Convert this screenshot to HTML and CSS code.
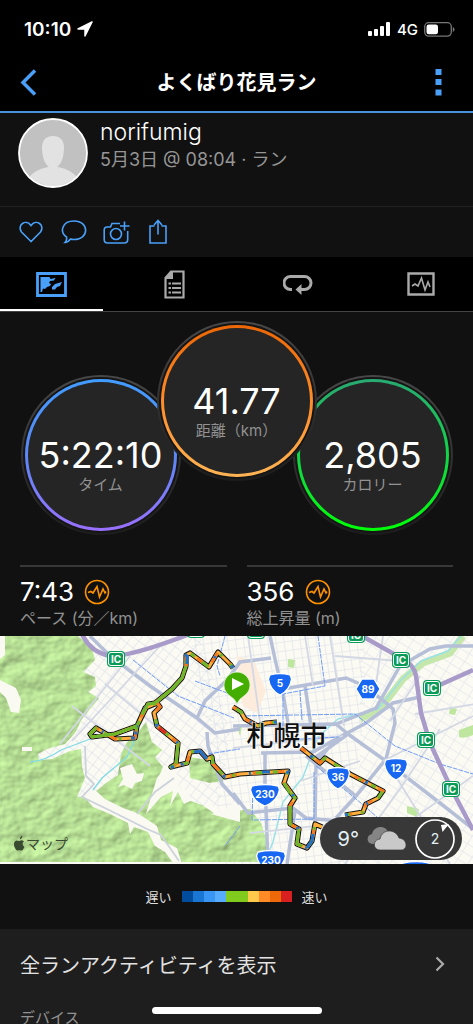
FILE: index.html
```html
<!DOCTYPE html>
<html lang="ja">
<head>
<meta charset="utf-8">
<meta name="viewport" content="width=device-width, initial-scale=1">
<title>よくばり花見ラン</title>
<link rel="stylesheet" href="styles.css">
</head>
<body>
<div class="status">
  <span class="clock">10:10</span>
  <svg width="16" height="16" viewBox="0 0 16 16"><path d="M15 1 1 8h7v7z" fill="#fff" stroke="#fff" stroke-width="1.500" stroke-linejoin="round"/></svg>
  <span class="spacer"></span>
  <svg width="23" height="15" viewBox="0 0 23 15" fill="#fff"><rect x="0" y="9" width="4" height="5" rx="1"/><rect x="6" y="7" width="4" height="7" rx="1"/><rect x="12" y="4" width="4" height="10" rx="1"/><rect x="18" y="0" width="4" height="14" rx="1"/></svg>
  <span class="network">4G</span>
  <svg width="31" height="15" viewBox="0 0 31 15"><rect x=".7" y=".7" width="26.600" height="13.400" rx="4" fill="none" stroke="#777" stroke-width="1.300"/><rect x="2.500" y="2.500" width="11.500" height="9.800" rx="2.300" fill="#fff"/><path d="M28.800 5v5q1.700-.8 1.700-2.500T28.800 5z" fill="#777"/></svg>
</div>
<header class="header">
  <button class="icon-button" aria-label="戻る"><svg width="17" height="27" viewBox="0 0 17 27"><path d="M15 1.500 3 13.500l12 12" fill="none" stroke="#4aa0f8" stroke-width="3.500"/></svg></button>
  <h1 class="title">よくばり花見ラン</h1>
  <button class="icon-button" aria-label="メニュー"><svg width="17" height="27" viewBox="0 0 17 27" fill="#4aa0f8"><path d="M5.500 0h6v6h-6zM5.500 10h6v6h-6zM5.500 20.500h6v6h-6z"/></svg></button>
</header>
<main>
<section class="profile">
  <svg class="avatar" width="70" height="70" viewBox="0 0 70 70"><defs><clipPath id="face"><circle cx="35" cy="35" r="33.500"/></clipPath></defs><circle cx="35" cy="35" r="34" fill="#c1c1c1"/><g clip-path="url(#face)" fill="#e2e2e2"><path d="M35 18c8 0 11 5 11 12 0 10-4 19-9 20h-4c-5-1-9-10-9-20 0-7 3-12 11-12z"/><path d="M10 60q8-9 20-11h10q12 2 20 11v10H10z"/></g><path d="M12 60q23 17 46 0" fill="none" stroke="#c8c8c8"/><circle cx="35" cy="35" r="34" fill="none" stroke="#fff" stroke-width="1.800"/></svg>
  <div><p class="name">norifumig</p><p class="date">5月3日 @ 08:04 · ラン</p></div>
</section>
<div class="actions">
  <button aria-label="いいね"><svg width="26" height="26" viewBox="0 0 26 26"><path d="M13 22.500 3.500 13C-1.500 6 8-.5 13 6.500 18-.5 27.500 6 22.500 13z"/></svg></button>
  <button aria-label="コメント"><svg width="26" height="26" viewBox="0 0 26 26"><path d="M5.500 18C-2 12.500 1.500 2 13 2c15.500 0 15.500 18.500 0 18.500-1.500 0-2.500 0-3.500-.5-1.500 2-3.500 3.500-5.500 3.500 1.500-1.500 2-3.500 1.500-5.500z"/></svg></button>
  <button aria-label="写真を追加"><svg width="27" height="26" viewBox="0 0 27 26"><path d="M17 4.500H9L7.500 8H4Q1.200 8 1.200 11v9.500q0 3.500 3.500 3.500h16.500q3.500 0 3.500-3.500V12M21.500 2.500v9M17 7h9.500"/><circle cx="13" cy="15" r="5.500"/></svg></button>
  <button aria-label="共有"><svg width="20" height="26" viewBox="0 0 20 26"><path d="M6.500 7H2v17h16V7h-4.500M10 15.500V2M6 6l4-4.500L14 6"/></svg></button>
</div>
<nav class="tabs">
  <button class="tab active" aria-label="概要"><svg width="31" height="25" viewBox="0 0 31 25"><path d="M1.500 1.500h28v22h-28z" fill="none" stroke="#4aa0f8" stroke-width="2.800"/><path d="M4.500 5h9l1 2 5-1-1.500 2.500-4 .5-1 2 2 1-1 2-3 1-2 2-2-.5L6 20H4.500zM26 10l-2 4-3 1-2 2.500h-3V15l3-3z" fill="#4aa0f8"/></svg></button>
  <button class="tab" aria-label="詳細"><svg width="21" height="29" viewBox="0 0 21 29"><path d="M7 1.500h12.500v26h-18V8z" fill="none" stroke="#aaa" stroke-width="2.200"/><path d="M1.500 9V7L7 1.500h2V9z" fill="#aaa"/><path d="M4.500 13.500H7m1 0h9M4.500 18H7m1 0h9M4.500 22.500H7m1 0h9" stroke="#aaa" stroke-width="2"/></svg></button>
  <button class="tab" aria-label="ラップ"><svg width="30" height="21" viewBox="0 0 30 21"><path d="M9 15.500H7.500a6.500 6.500 0 0 1 0-13h14a6.500 6.500 0 0 1 0 13H17" fill="none" stroke="#aaa" stroke-width="3"/><path d="M12.500 15.500 18.500 10v11z" fill="#aaa"/></svg></button>
  <button class="tab" aria-label="グラフ"><svg width="28" height="24" viewBox="0 0 28 24"><path d="M1.500 1.500h25v21h-25z" fill="none" stroke="#aaa" stroke-width="2.400"/><path d="M5 14l3-2 3 2 3.500-8 3.500 12L21 10l2 5" fill="none" stroke="#aaa" stroke-width="1.600"/></svg></button>
</nav>
<section class="gauges">
  <div class="gauge"><div class="ring time"><p class="value">5:22:10</p><p class="label">タイム</p></div></div>
  <div class="gauge main"><div class="ring distance"><p class="value">41.77</p><p class="label">距離（km）</p></div></div>
  <div class="gauge"><div class="ring calories"><p class="value">2,805</p><p class="label">カロリー</p></div></div>
</section>
<section class="stats">
  <div class="stat"><p class="stat-value">7:43 <svg width="26" height="26" viewBox="0 0 26 26"><g fill="none" stroke="#ff9200" stroke-width="1.600"><circle cx="13" cy="13" r="11.500"/><path d="M4 13.500l3-1 2 1.500 4-6.500 2.500 10.500L19 10l2 4 1-1.500"/></g></svg></p><p class="label wide">ペース (分／km)</p></div>
  <div class="stat"><p class="stat-value">356 <svg width="26" height="26" viewBox="0 0 26 26"><g fill="none" stroke="#ff9200" stroke-width="1.600"><circle cx="13" cy="13" r="11.500"/><path d="M4 13.500l3-1 2 1.500 4-6.500 2.500 10.500L19 10l2 4 1-1.500"/></g></svg></p><p class="label wide">総上昇量 (m)</p></div>
</section>
<section class="map">
<svg class="map-art" viewBox="0 0 473 228" role="img" aria-label="ルートマップ">
  <defs>
    <pattern id="gridW" width="9" height="8" patternUnits="userSpaceOnUse" patternTransform="rotate(-52)"><path d="M0 0H9M0 0V8" stroke="#d9dde8" stroke-width="1.100"/></pattern>
    <pattern id="gridC" width="8" height="9" patternUnits="userSpaceOnUse" patternTransform="rotate(-8)"><path d="M0 0H8M0 0V9" stroke="#dadfe8" stroke-width="1.100"/></pattern>
    <pattern id="gridE" width="11" height="9" patternUnits="userSpaceOnUse" patternTransform="rotate(32)"><path d="M0 0H11M0 0V9" stroke="#dce0e8" stroke-width="1"/></pattern>
    <filter id="relief" x="0" y="0" width="100%" height="100%" color-interpolation-filters="sRGB"><feTurbulence type="fractalNoise" baseFrequency=".05 .06" numOctaves="3" seed="6"/><feDiffuseLighting lighting-color="#c0ea9c" surfaceScale="1.800" diffuseConstant="1.120"><feDistantLight azimuth="225" elevation="58"/></feDiffuseLighting><feComposite in2="SourceGraphic" operator="in"/></filter>
    <g id="ic"><rect x="-9" y="-8" width="18" height="16" rx="4" fill="#0b9b59"/><rect x="-7.500" y="-6.500" width="15" height="13" rx="2.500" fill="none" stroke="#fff"/><text y="4" class="sign">IC</text></g>
    <path id="shield" d="M-10-9Q0-12 10-9q1 2 1.500 4Q10 6 0 11-10 6-11.500-5-11-7-10-9z" fill="#1767f2" stroke="#fff" stroke-width="1.300"/>
    <path id="wide" d="M-13-9Q0-12 13-9q1 2 1.500 4Q12 7 0 11-12 7-14.500-5-14-7-13-9z" fill="#1767f2" stroke="#fff" stroke-width="1.300"/>
    <path id="route" d="M233 32l-3-4-12-12-9 15-19-14-4 2v11l-4 12-10 11-17 14-7 1-6 12-5 10-22 8-23 3-2-3 6-6 19 11 20-1 2-12 8-18 12-5 3 4-6 6 3 13 21 17-2 21-5 3 16-4 3-11 10-1 7 8 5-2 1 7 12 13 15-3 48-3-4 12 11 15-5 8v18l9 5-2 15 10 4 5-7 3-17 7 3M345 179l18-3 3-8 12-6 5-7-33-17-25-16-5 5-19-15M277 86l-11 1-8 3-13-7-4-7-8-5"/>
  </defs>
  <path fill="#fbfaf3" d="M0 0h473v228H0z"/>
  <path fill="url(#gridW)" d="M70 0h130l30 95-10 75H20z"/>
  <path fill="url(#gridC)" d="M190 0h175v70L345 228H225l-15-130z"/>
  <path fill="url(#gridE)" d="M360 0h113v228H335l25-100z"/>
  <path fill="#fdecdc" d="M237 20l17 5 12 30-9 22-14-7-5-22z"/>
  <g fill="#b6df94" filter="url(#relief)"><path d="M0 0h78l14 12 3 12-12 12 12 5 1 9-8 6 11 6-8 10-9 11-7 14-10 11-18 5-9 5 1 6 13-1 18-8 11-2 1 18 3 11-8 19 13-1 16-13 12-8 3-21 6-12 12-11 7-9 6 20 10 8-7 7 8 10-6 14 8 9 8-2 15 12 14 5 15 10 13-3 20-3 11 14 7 22v17H0z"/><path d="M189 121l18 3 17 12-1 9-13 2-20-5z"/></g>
  <g fill="#fafaf2"><path d="M0 44l16 8 5 12-2 13-8-1-5-14-6-6zM22 111h10v4H22zM82 158l13-4 10 9 18 9 14 5 8 5 12 8 4 14 16 8 5 16h-8l-9-12-10-6-7-14-14-5-4 7-2-11-18-9-17-7zM120 132l12-4 5 10 7-1-2 8-7 2-3 6-8-4-6 2 5-8zM157 142l10-13 10 8 2 14 9 4 4 9-8 4-6-12-8 14 3-15-12 6-15 17 5-17zM211 178l14-4 15-14v26l-11-3z"/><path d="M0 0h5v19l-5 4z"/></g>
  <path d="M30 126q15-1 31-12l37-14M135 103l-8 18-25 21-9 12" fill="none" stroke="#83dbe7" stroke-width="1.300"/>
  <path d="M85 110l1 30 8 8-12 13 25 12 40 20 14 6 18 26M137 178l18-22 19-14" fill="none" stroke="#cdd3dc" stroke-width="1.800"/>
  <path d="M463 0l-13 17-27 10-20 16-23 30-20 10" fill="none" stroke="#c6e7ab" stroke-width="7"/>
  <path d="M461 0l-13 15-27 10-20 19-23 29-40 10-20 18-15 40-20 25-10 40-9 22" fill="none" stroke="#9ae2e8" stroke-width="1.500"/>
  <g fill="#bfe69f"><path d="M288 23l7 1-1 8-6-1zM450 71l7 2-2 6-6-1zM459 94l14-5v10q-9 4-14 2zM407 170l12 3-2 8-10-4zM236 88l6 2-2 10z"/></g>
  <g fill="none" stroke="#b5bfd7" stroke-width="3.500">
    <path d="M90 0l20 20 40 30 47 32 18 15 25-4M197 82l8-17 23-22 12-17 31-4M207 96l1 14 4 12 10 26 18 20"/>
    <path d="M270 0l5 23 8 34 5 30M283 53l63-11 14 6 20 14 13 11 2 14-9 36-30 37-20 22"/>
    <path d="M233 90l103-2 40-16 24-42 30-17 16-3h27M261 117l52-1 23-13 30-16 27-20 27-6M336 88l12 10 35 25 57 44 33 26"/>
    <path d="M305 50l6 40M233 157l15 20 45-5 13 10 33 3M265 117v30l3 81M316 127l-1 60M316 127l20-24M295 175l-8 53M348 98l-32 23M356 160l-50-40"/>
  </g>
  <g fill="none" stroke="#d3d8e4" stroke-width="1.800"><path d="M72 70l78 60M105 48l70 58M130 20l-70 88M160 10l-88 95M248 0l14 100M305 0l8 50M330 0l14 90M383 0l-8 55M233 112l110-12M300 145l60-20M345 228l55-75 40-60M385 123l65 105M420 40l-30 45M473 80l-90 45M473 140l-70 50M250 197l75-8M335 20l65 5M475 68l-60 10"/></g>
  <path d="M133 24l45 36 56 22M195 45l40 15M225 0l-8 30 3 10M318 0l7 50-42 8v46l56-3M240 80l115-2 40 32 45 18 33 10M316 130l46 38 40 35M253 150l-1 34 62-1V135M208 118l32-5M300 55l2 30M240 190l-15 20" fill="none" stroke="#719df5" stroke-width="1" stroke-dasharray="5 1"/>
  <g fill="none" stroke="#a99bc9" stroke-width="4.500"><path d="M82-2q8 18 28 22 20 1 80-22M362 0l39 22q13 6 15 18l5 37 9 30 20 43 23 44M433 52l40-18"/></g>
  <g fill="none" stroke-linejoin="round">
    <use href="#route" stroke="#141414" stroke-width="5.200"/>
    <use href="#route" stroke="#ffad3b" stroke-width="3"/>
    <use href="#route" stroke="#f47b20" stroke-width="3" stroke-dasharray="7 16 11 13"/>
    <use href="#route" stroke="#70b82b" stroke-width="3" stroke-dasharray="5 11 3 21 8 9"/>
    <use href="#route" stroke="#2471c8" stroke-width="3" stroke-dasharray="3 24 2 37"/>
    <path d="M186 30l-4 12-10 11-17 14-7 1-5 9M137 90l-22 8-23 3-2-3 6-6M178 109l-2 19M284 147l6 10M290 170v18M299 193l-2 13" stroke="#70b82b" stroke-width="3"/>
    <path d="M187 19v9M194 116l6-1 7 8M262 136h8M307 212l5-7 1-7M171 131h3M131 102h4" stroke="#2471c8" stroke-width="3"/>
    <path d="M159 92l7 5" stroke="#df2a20" stroke-width="3"/>
  </g>
  <use href="#ic" x="116" y="23"/><use href="#ic" x="196" y="-6"/><use href="#ic" x="256" y="-5"/><use href="#ic" x="356" y="-1"/><use href="#ic" x="401" y="24"/><use href="#ic" x="432" y="52"/><use href="#ic" x="426" y="104"/><use href="#ic" x="451" y="153"/>
  <use href="#shield" x="280" y="48"/><text x="280" y="51" class="sign">5</text>
  <path d="M362 43h12l6 10-6 10h-12l-6-10z" fill="#1767f2" stroke="#fff" stroke-width="1.300"/><text x="368" y="57" class="sign">89</text>
  <use href="#shield" x="338" y="142"/><text x="338" y="145" class="sign">36</text>
  <use href="#shield" x="396" y="133"/><text x="396" y="136" class="sign">12</text>
  <use href="#wide" x="265" y="159"/><text x="265" y="162" class="sign">230</text>
  <use href="#wide" x="271" y="225"/><text x="271" y="228" class="sign">230</text>
  <use href="#wide" x="416" y="236"/>
  <path d="M237 68q-2-5-7-8a13 13 0 1 1 14 0q-5 3-7 8z" fill="#43ad00" stroke="#e9f4df" stroke-width=".8"/><path d="M232 42v12l12-6z" fill="#fff"/>
  <text x="287" y="110" class="city">札幌市</text>
  <path d="M20 203.500q-.3-3 2.500-4 0 3-2.500 4zM19.500 205q2-1.500 4.500.3-3 2.500.4 5.700-1.500 4-3.400 3.500-1.500-.7-3 0c-3 .8-6.500-9-1.500-10q1.500 0 3 .5z" fill="#3b4b30"/>
  <text x="26" y="213" class="credit">マップ</text>
</svg>
<div class="weather"><span>9°</span>
  <svg width="40" height="24" viewBox="0 0 40 24"><path d="M6 17C-1 17-1 8 5 7c2-9 14-9 16-2 5 0 7 5 5 12z" fill="#858585"/><path d="M13 23C6 23 5 13 13 12c2-11 16-10 19-1 9 1 9 12 2 12z" fill="#c9c9c9" stroke="#383838" stroke-width=".7"/></svg>
  <span class="wind"><svg width="40" height="40" viewBox="0 0 40 40"><circle cx="20" cy="20" r="19" fill="none" stroke="#fff" stroke-width="1.700"/><path d="M34 5 26 6l1.500 7z" fill="#fff"/></svg><b>2</b></span>
</div>
</section>
<div class="legend"><span>遅い</span><div class="scale"><i class="s1"></i><i class="s2"></i><i class="s3"></i><i class="s4"></i><i class="s5"></i><i class="s5"></i><i class="s6"></i><i class="s7"></i><i class="s8"></i><i class="s9"></i></div><span>速い</span></div>
<section class="more"><a href="#" class="link">全ランアクティビティを表示<svg width="10" height="16" viewBox="0 0 10 16"><path d="M1.500 1.500 8 8l-6.500 6.500" fill="none" stroke="#aaa" stroke-width="2.200"/></svg></a><p class="label device">デバイス</p></section>
</main>
<div class="home-bar"></div>
</body>
</html>
```

FILE: styles.css
```css
* { box-sizing: border-box; }
html { background: #111; }
body {
  margin: 0;
  height: 100vh;
  overflow: hidden;
  background: #111;
  color: #fff;
  font-family: Inter, "Noto Sans CJK JP", sans-serif;
}
p, h1 { margin: 0; }
button { padding: 0; border: 0; background: none; color: inherit; font: inherit; }
svg { display: block; flex: none; }
.status {
  display: flex;
  align-items: center;
  height: 56px;
  padding: 2px 18px 0 24px;
  gap: 6px;
  background: #000;
}
.clock { font-size: 19px; font-weight: 600; }
.spacer { flex: 1; }
.network { font-size: 15px; font-weight: 500; }
.header {
  display: flex;
  align-items: center;
  justify-content: space-between;
  height: 57px;
  padding: 0 17px 2px;
  background: #000;
  border-bottom: 2px solid #4792dd;
}
.icon-button { width: 36px; height: 40px; padding-left: 3px; display: flex; align-items: center; }
.icon-button:last-child { padding: 0; justify-content: center; }
.title { font-size: 20px; line-height: 30px; font-weight: 700; }
.profile {
  display: flex;
  gap: 12px;
  height: 94px;
  padding: 5px 18px;
  border-bottom: 1px solid #222;
}
.name { font-size: 23px; line-height: 28px; font-weight: 300; }
.date { font-size: 18px; line-height: 28px; color: #969696; }
.actions { display: flex; height: 50px; padding-left: 9px; }
.actions button { display: flex; width: 43px; align-items: center; justify-content: center; }
.actions svg { fill: none; stroke: #4aa0f8; stroke-width: 1.6px; }
.actions button:last-child { width: 39px; }
.tabs {
  display: grid;
  grid-template-columns: repeat(4, 1fr);
  gap: 20px;
  height: 55px;
  background: #000;
  border-bottom: 1px solid #444;
}
.tab { display: flex; align-items: center; justify-content: center; padding-top: 2px; border-bottom: 2px solid transparent; }
.tab.active { border-color: #fff; }
.gauges { display: flex; justify-content: center; align-items: flex-start; height: 253px; padding-top: 9px; }
.gauge {
  width: 160px;
  height: 160px;
  margin: 54px -12px 0;
  flex: none;
  padding: 2px;
  border: 2px solid transparent;
  border-radius: 50%;
  background: linear-gradient(#151515, #151515) padding-box, linear-gradient(#484848, #1c1c1c) border-box;
}
.gauge.main { position: relative; z-index: 1; margin-top: 0; }
.ring {
  height: 100%;
  padding-top: 55px;
  border: 3px solid transparent;
  border-radius: 50%;
  text-align: center;
}
.time { background: linear-gradient(#252525, #252525) padding-box, linear-gradient(#429cff, #5b88f5 50%, #9a70ff) border-box; }
.distance { background: linear-gradient(#252525, #252525) padding-box, linear-gradient(#ec6707, #ff8c28 50%, #ffb454) border-box; }
.calories { background: linear-gradient(#252525, #252525) padding-box, linear-gradient(#29aa72, #12d448 50%, #00ff08) border-box; }
.value { font-size: 36px; line-height: 36px; white-space: nowrap; }
.label { font-size: 15px; line-height: 24px; color: #929292; white-space: nowrap; }
.label.wide { font-size: 16px; }
.stats { display: grid; grid-template-columns: 1fr 1fr; gap: 20px; padding: 0 20px 6px; }
.stat { border-top: 2px solid #383838; padding-top: 11px; }
.stat-value { display: flex; align-items: center; gap: 10px; font-size: 26px; line-height: 28px; }
.map { position: relative; }
.map-art { width: 100%; height: auto; }
.sign { font-family: Inter, sans-serif; font-size: 10px; font-weight: 700; fill: #fff; text-anchor: middle; }
.city { font-family: "Noto Sans CJK JP", sans-serif; font-size: 27px; font-weight: 500; fill: #111; stroke: #fff; stroke-width: 1px; paint-order: stroke; text-anchor: middle; }
.credit { font-family: "Noto Sans CJK JP", sans-serif; font-size: 14px; fill: #3b4b30; }
.weather {
  position: absolute;
  right: 11px;
  bottom: 4px;
  display: flex;
  align-items: center;
  height: 43px;
  padding: 0 7px 0 17px;
  gap: 8px;
  border-radius: 22px;
  background: #383838;
  color: #e3eef5;
  font-size: 20px;
}
.wind { display: grid; place-items: center; font-size: 14px; }
.wind > * { grid-area: 1 / 1; }
.wind b { font-weight: 400; }
.legend { display: flex; align-items: center; justify-content: center; gap: 10px; height: 65px; font-size: 13px; color: #ddd; }
.scale { display: flex; height: 11px; }
.scale i { width: 11px; }
.s1 { background: #024c9e; }
.s2 { background: #1976d2; }
.s3 { background: #3996f5; }
.s4 { background: #57acff; }
.s5 { background: #80cb1e; }
.s6 { background: #ffca4b; }
.s7 { background: #ff8b27; }
.s8 { background: #ed6809; }
.s9 { background: #d82021; }
.more { min-height: 95px; padding: 0 20px; background: #1e1e1e; }
.link { display: flex; align-items: center; justify-content: space-between; height: 70px; padding-right: 8px; color: #e3e3e3; font-size: 20px; text-decoration: none; }
.device { padding-top: 7px; }
.home-bar {
  position: fixed;
  left: 50%;
  bottom: 10px;
  width: 170px;
  height: 7px;
  margin-left: -85px;
  border-radius: 4px;
  background: #fff;
}
```
